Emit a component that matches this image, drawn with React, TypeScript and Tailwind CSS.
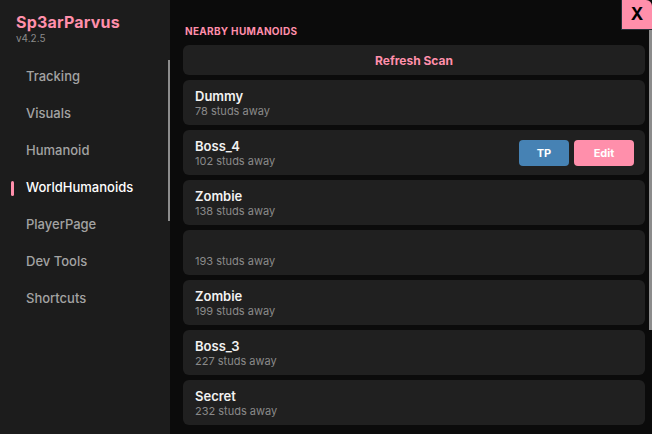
import React from "react";

const nav = ["Tracking", "Visuals", "Humanoid", "WorldHumanoids", "PlayerPage", "Dev Tools", "Shortcuts"];
const items = [
  { name: "Dummy", d: 78 },
  { name: "Boss_4", d: 102, active: true },
  { name: "Zombie", d: 138 },
  { name: "", d: 193 },
  { name: "Zombie", d: 199 },
  { name: "Boss_3", d: 227 },
  { name: "Secret", d: 232 },
];

export default function App() {
  return (
    <div
      className="relative flex h-[434px] w-[652px] overflow-hidden bg-[#0b0b0b]"
      style={{ fontFamily: "Inter, 'Noto Sans', sans-serif" }}
    >
      <aside className="relative flex w-[170px] shrink-0 flex-col bg-[#1c1c1c]">
        <div className="px-4 pt-[12px]">
          <div className="text-[16px] font-bold leading-[20px] tracking-[0.2px] text-[#ff8fab]">Sp3arParvus</div>
          <div className="text-[10px] leading-[12px] text-[#8a8a8a]">v4.2.5</div>
        </div>
        <nav className="mt-[14px] flex flex-col">
          {nav.map((n) => {
            const active = n === "WorldHumanoids";
            return (
              <div key={n} className="relative flex h-[37px] items-center pl-[26px]">
                {active && <div className="absolute left-[11px] top-[12px] h-[15px] w-[3px] rounded-sm bg-[#ff8fab]" />}
                <span className={`text-[13px] font-medium ${active ? "text-white" : "text-[#a3a3a3]"}`}>{n}</span>
              </div>
            );
          })}
        </nav>
        <div className="absolute right-0 top-[60px] h-[161px] w-[2px] bg-[#8c8c8c]" />
      </aside>

      <main className="relative flex flex-1 flex-col pl-[13px] pr-[7px]">
        <div className="pl-[2px] pt-[25px] text-[10px] font-bold leading-[12px] tracking-[0.3px] text-[#ff8fab]">NEARBY HUMANOIDS</div>
        <div className="mt-[8px] flex flex-col gap-[5px]">
          <div className="flex h-[30px] items-center justify-center rounded-[6px] bg-[#202020] pt-[2px] text-[12px] font-bold text-[#ff8fab]">
            Refresh Scan
          </div>
          {items.map((it, i) => (
            <div key={i} className="flex h-[45px] shrink-0 items-start rounded-[6px] bg-[#202020] pl-[12px] pr-[11px] pt-[7px]">
              <div className="flex flex-1 flex-col">
                <span className="h-[18px] text-[13px] font-semibold leading-[18px] text-[#f2f2f2]">{it.name}</span>
                <span className="text-[11px] leading-[13px] text-[#8a8a8a]">{it.d} studs away</span>
              </div>
              {it.active && (
                <div className="flex gap-[5px] pt-[3px]">
                  <div className="flex h-[26px] w-[50px] items-center justify-center rounded-[4px] bg-[#4682b4] text-[11px] font-bold text-white">TP</div>
                  <div className="flex h-[26px] w-[60px] items-center justify-center rounded-[4px] bg-[#ff8fab] text-[11px] font-bold text-white">Edit</div>
                </div>
              )}
            </div>
          ))}
        </div>
        <div className="absolute right-0 top-[30px] h-[300px] w-[3px] bg-[#8c8c8c]" />
      </main>

      <div className="absolute right-0 top-0 flex h-[30px] w-[31px] items-center justify-center rounded-tr-[6px] border-b border-l border-[#26303a] bg-[#ff8fab] text-[17px] font-bold text-black">
        X
      </div>
    </div>
  );
}
